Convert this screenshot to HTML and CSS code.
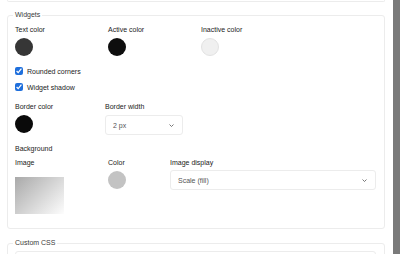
FILE: index.html
```html
<!DOCTYPE html>
<html lang="en">
<head>
  <meta charset="UTF-8">
  <meta name="viewport" content="width=device-width, initial-scale=1.0">
  <title>Widget settings</title>
  <link rel="stylesheet" href="styles.css">
</head>
<body>
  <div class="page">
    <div class="prev-box"></div>

    <fieldset class="group">
      <legend>Widgets</legend>
      <div class="row">
        <div class="field w93">
          <span class="label">Text color</span>
          <span class="swatch" style="background:#363636"></span>
        </div>
        <div class="field w93">
          <span class="label">Active color</span>
          <span class="swatch" style="background:#0e0e0e"></span>
        </div>
        <div class="field">
          <span class="label">Inactive color</span>
          <span class="swatch light" style="background:#f0f0f0"></span>
        </div>
      </div>

      <label class="check first"><input type="checkbox" checked> Rounded corners</label>
      <label class="check"><input type="checkbox" checked> Widget shadow</label>

      <div class="row gap-top">
        <div class="field w90">
          <span class="label">Border color</span>
          <span class="swatch" style="background:#0a0a0a"></span>
        </div>
        <div class="field">
          <span class="label">Border width</span>
          <div class="select small">
            <span>2 px</span>
            <svg width="5" height="3" viewBox="0 0 5 3"><path d="M0.5 0.5 L2.5 2.5 L4.5 0.5" fill="none" stroke="#555" stroke-width="0.8"/></svg>
          </div>
        </div>
      </div>

      <div class="label heading">Background</div>
      <div class="row">
        <div class="field w93">
          <span class="label">Image</span>
          <span class="image-preview"></span>
        </div>
        <div class="field w62">
          <span class="label">Color</span>
          <span class="swatch" style="background:#c3c3c3"></span>
        </div>
        <div class="field grow">
          <span class="label">Image display</span>
          <div class="select">
            <span>Scale (fill)</span>
            <svg width="5" height="3" viewBox="0 0 5 3"><path d="M0.5 0.5 L2.5 2.5 L4.5 0.5" fill="none" stroke="#555" stroke-width="0.8"/></svg>
          </div>
        </div>
      </div>
    </fieldset>

    <fieldset class="group css-group">
      <legend>Custom CSS</legend>
      <div class="editor"></div>
    </fieldset>
  </div>
  <div class="scrollbar"></div>
</body>
</html>
```

FILE: styles.css
```css
body {
  margin: 0;
  background: #fff;
  font-family: 'Liberation Sans', Arial, sans-serif;
  font-size: 7px;
  color: #222;
  display: flex;
  height: 254px;
  overflow: hidden;
}
.page {
  width: 378px;
  padding: 0 8px 0 7px;
}
.scrollbar {
  width: 7px;
  background: #7a7a7a;
}
.prev-box {
  height: 1px;
  border: 1px solid #ececec;
  border-top: none;
  border-radius: 0 0 3px 3px;
}
.group {
  margin: 8px 0 0;
  padding: 5px 8px 14px 7px;
  border: 1px solid #ececec;
  border-radius: 3px;
  min-width: 0;
}
.group legend {
  padding: 0 2px;
  margin-left: -2px;
  line-height: 10px;
  color: #3a3a3a;
}
.row {
  display: flex;
}
.gap-top {
  margin-top: 10px;
}
.field {
  display: flex;
  flex-direction: column;
  align-items: flex-start;
}
.w93 { width: 93px; }
.w90 { width: 90px; }
.w62 { width: 62px; }
.grow { flex: 1; align-items: stretch; }
.label {
  line-height: 9px;
  color: #222;
}
.heading {
  margin-top: 9px;
  margin-bottom: 5px;
}
.swatch {
  width: 18px;
  height: 18px;
  margin-top: 4px;
  border-radius: 50%;
  box-sizing: border-box;
}
.swatch.light {
  border: 1px solid #e2e2e2;
}
.check {
  display: flex;
  align-items: center;
  gap: 4px;
  height: 10px;
  margin-top: 6px;
  color: #222;
}
.check.first {
  margin-top: 10px;
}
.check input {
  width: 8px;
  height: 8px;
  margin: 0;
  accent-color: #1f6fdc;
}
.select {
  display: flex;
  align-items: center;
  justify-content: space-between;
  height: 20px;
  margin-top: 3px;
  padding: 0 8px 0 7px;
  border: 1px solid #ececec;
  border-radius: 3px;
  box-sizing: border-box;
  color: #555;
}
.select.small {
  width: 78px;
  margin-top: 4px;
}
.image-preview {
  width: 49px;
  height: 37px;
  margin-top: 10px;
  background: linear-gradient(135deg, #a9a9a9, #fdfdfd);
}
.css-group {
  margin-top: 9px;
  padding-top: 3px;
  padding-bottom: 20px;
}
.editor {
  height: 20px;
  border: 1px solid #ececec;
  border-radius: 3px;
}
```
